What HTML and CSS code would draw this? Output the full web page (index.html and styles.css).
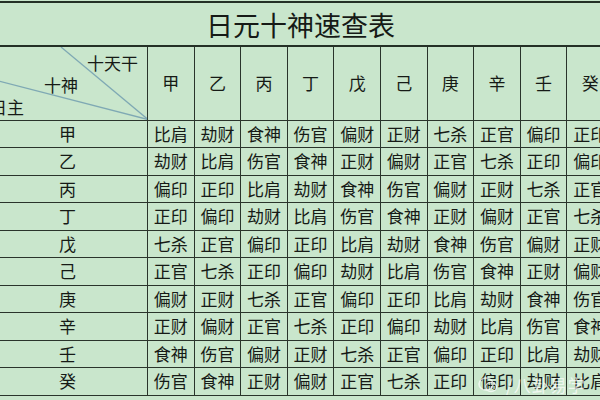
FILE: index.html
```html
<!DOCTYPE html>
<html lang="zh">
<head>
<meta charset="utf-8">
<link rel="stylesheet" href="styles.css">
</head>
<body>
<div class="page">
  <table class="sheet">
    <colgroup>
      <col class="c-first">
      <col class="c"><col class="c"><col class="c"><col class="c"><col class="c">
      <col class="c"><col class="c"><col class="c"><col class="c"><col class="c">
    </colgroup>
    <tr class="r-title"><td colspan="11" class="title">日元十神速查表</td></tr>
    <tr class="r-head">
      <td class="corner">
        <svg class="diag" viewBox="0 0 160 72" preserveAspectRatio="none" width="160" height="72">
          <line x1="160" y1="72" x2="73" y2="0" stroke="#7fa9b4" stroke-width="1.3"/>
          <line x1="160" y1="72" x2="0" y2="31" stroke="#7fa9b4" stroke-width="1.3"/>
        </svg>
        <div class="lab lab-top">十天干</div>
        <div class="lab lab-mid">十神</div>
        <div class="lab lab-bot">日主</div>
      </td>
      <td>甲</td><td>乙</td><td>丙</td><td>丁</td><td>戊</td><td>己</td><td>庚</td><td>辛</td><td>壬</td><td>癸</td>
    </tr>
    <tr class="r"><td>甲</td><td>比肩</td><td>劫财</td><td>食神</td><td>伤官</td><td>偏财</td><td>正财</td><td>七杀</td><td>正官</td><td>偏印</td><td>正印</td></tr>
    <tr class="r"><td>乙</td><td>劫财</td><td>比肩</td><td>伤官</td><td>食神</td><td>正财</td><td>偏财</td><td>正官</td><td>七杀</td><td>正印</td><td>偏印</td></tr>
    <tr class="r"><td>丙</td><td>偏印</td><td>正印</td><td>比肩</td><td>劫财</td><td>食神</td><td>伤官</td><td>偏财</td><td>正财</td><td>七杀</td><td>正官</td></tr>
    <tr class="r"><td>丁</td><td>正印</td><td>偏印</td><td>劫财</td><td>比肩</td><td>伤官</td><td>食神</td><td>正财</td><td>偏财</td><td>正官</td><td>七杀</td></tr>
    <tr class="r"><td>戊</td><td>七杀</td><td>正官</td><td>偏印</td><td>正印</td><td>比肩</td><td>劫财</td><td>食神</td><td>伤官</td><td>偏财</td><td>正财</td></tr>
    <tr class="r"><td>己</td><td>正官</td><td>七杀</td><td>正印</td><td>偏印</td><td>劫财</td><td>比肩</td><td>伤官</td><td>食神</td><td>正财</td><td>偏财</td></tr>
    <tr class="r"><td>庚</td><td>偏财</td><td>正财</td><td>七杀</td><td>正官</td><td>偏印</td><td>正印</td><td>比肩</td><td>劫财</td><td>食神</td><td>伤官</td></tr>
    <tr class="r"><td>辛</td><td>正财</td><td>偏财</td><td>正官</td><td>七杀</td><td>正印</td><td>偏印</td><td>劫财</td><td>比肩</td><td>伤官</td><td>食神</td></tr>
    <tr class="r"><td>壬</td><td>食神</td><td>伤官</td><td>偏财</td><td>正财</td><td>七杀</td><td>正官</td><td>偏印</td><td>正印</td><td>比肩</td><td>劫财</td></tr>
    <tr class="r"><td>癸</td><td>伤官</td><td>食神</td><td>正财</td><td>偏财</td><td>正官</td><td>七杀</td><td>正印</td><td>偏印</td><td>劫财</td><td>比肩</td></tr>
  </table>
  <div class="mark">
    <svg class="mark-icon" viewBox="0 0 20 18" width="20" height="18">
      <ellipse cx="8" cy="8" rx="7" ry="6" fill="none" stroke="#ffffff" stroke-width="1.6"/>
      <ellipse cx="13" cy="11" rx="5.5" ry="4.5" fill="none" stroke="#ffffff" stroke-width="1.4"/>
    </svg>
    <span class="mark-text">/八卦易学</span>
  </div>
</div>
</body>
</html>
```

FILE: styles.css
```css
html, body {
  margin: 0;
  padding: 0;
  width: 600px;
  height: 400px;
  overflow: hidden;
  background: #c9e6cc;
}
.page {
  position: relative;
  width: 600px;
  height: 400px;
  overflow: hidden;
  padding-top: 1px;
  box-sizing: border-box;
}
.sheet {
  margin-left: -13px;
  width: 626px;
  table-layout: fixed;
  border-collapse: collapse;
  font-family: "Noto Sans CJK SC", "Noto Sans", sans-serif;
  color: #161a16;
  background: #c9e6cc;
}
.c-first { width: 160px; }
.c { width: 46.6px; }
.sheet td {
  border: 1px solid #2a342b;
  padding: 0;
  text-align: center;
  vertical-align: middle;
  font-size: 17px;
  line-height: 20px;
  white-space: nowrap;
  overflow: hidden;
}
.sheet .title {
  height: 41px;
  border-top: 2px solid #243026;
  border-bottom: 2px solid #243026;
  font-size: 27px;
  line-height: 30px;
  padding-top: 1px;
}
.r-head td {
  height: 67.5px;
  border-top: 2px solid #243026;
}
.r td {
  height: 26.5px;
}
.sheet td.corner {
  position: relative;
  padding: 5px 0 0 0;
  vertical-align: top;
  text-align: left;
}
.diag {
  position: absolute;
  left: 0;
  top: 0;
  width: 160px;
  height: 100%;
}
.lab {
  position: relative;
  line-height: 22px;
  height: 22px;
}
.lab-top { text-align: right; padding-right: 9px; }
.lab-mid { padding-left: 56px; }
.lab-bot { padding-left: 2px; }
.mark {
  position: absolute;
  left: 478px;
  top: 375px;
  display: flex;
  align-items: center;
  gap: 8px;
  opacity: 0.7;
}
.mark-icon { display: block; }
.mark-text {
  font-family: "Noto Sans CJK SC", sans-serif;
  font-size: 17px;
  line-height: 20px;
  color: #ffffff;
  letter-spacing: 1px;
}
```
